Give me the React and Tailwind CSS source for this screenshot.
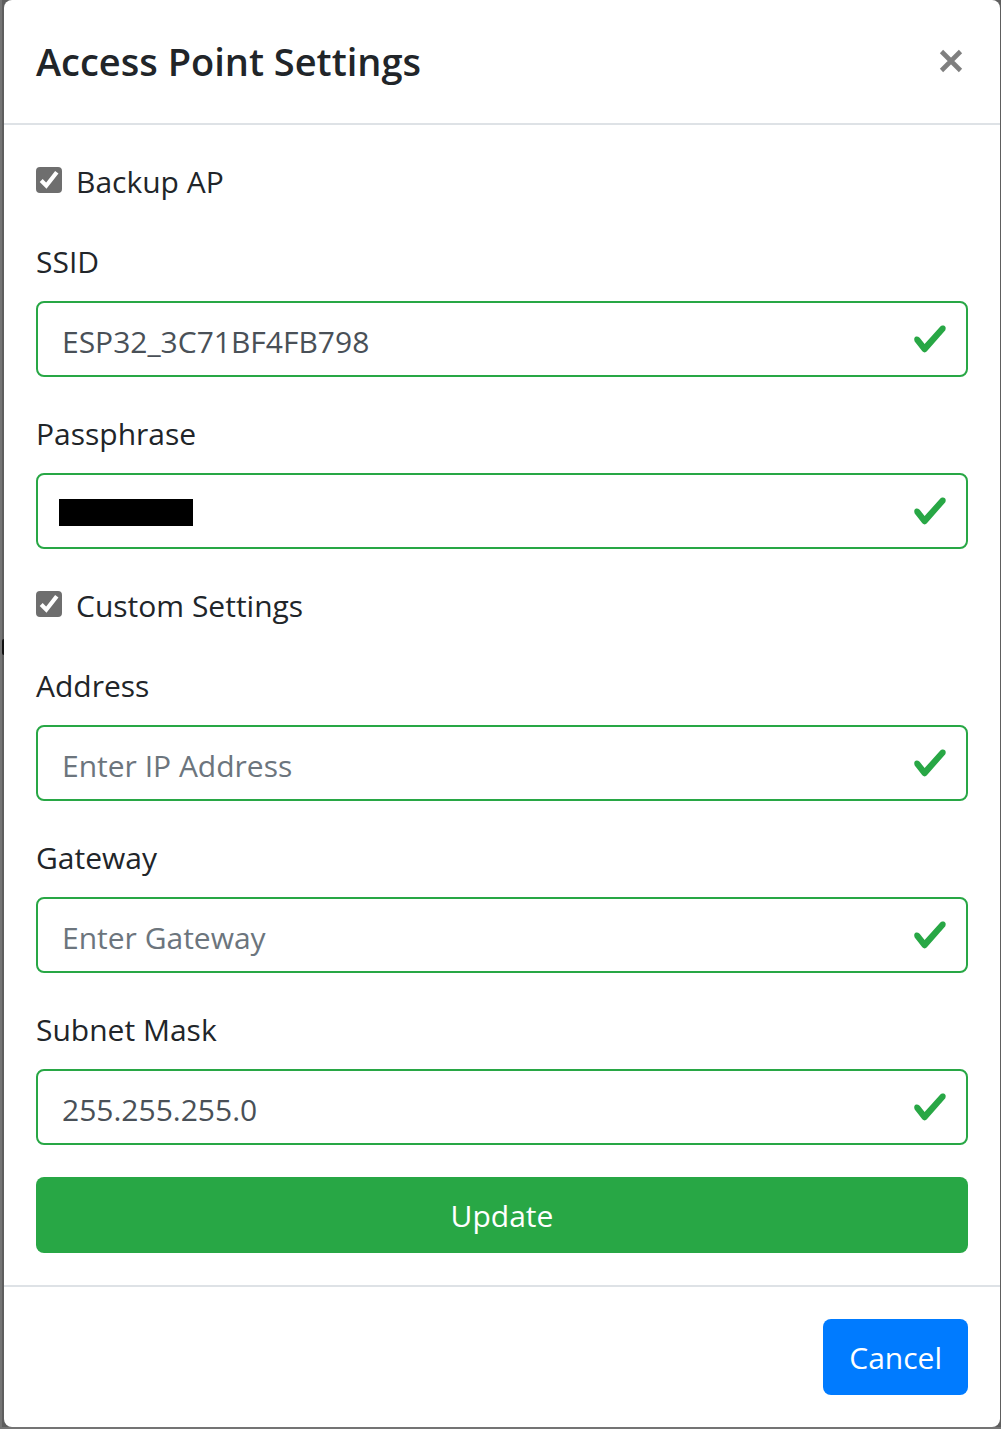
import React from "react";
import { useState } from "react";

function ValidIcon() {
  return (
    <svg
      viewBox="0 0 8 8"
      aria-hidden="true"
      className="pointer-events-none absolute right-5 top-5 size-9 fill-[#28a745]"
    >
      <path d="M2.3 6.73L.6 4.53c-.4-1.04.46-1.4 1.1-.8l1.1 1.4 3.4-3.8c.6-.63 1.6-.27 1.2.7l-4 4.6c-.43.5-.8.4-1.1.1z" />
    </svg>
  );
}

function Field({ id, label, type = "text", initial = "", placeholder, masked = false }) {
  const [value, setValue] = useState(initial);
  return (
    <div className="flex flex-col gap-4">
      <label htmlFor={id}>{label}</label>
      <div className="relative">
        <input
          id={id}
          type={type}
          value={value}
          placeholder={placeholder}
          onChange={(e) => setValue(e.target.value)}
          className="block h-19 w-full rounded-lg border-2 border-[#28a745] bg-white pt-1 pr-18 pl-6 text-[#495057] outline-none placeholder:text-[#6c757d]"
        />
        {masked && <span className="absolute top-[26px] left-[23px] h-[27px] w-[134px] bg-black" />}
        <ValidIcon />
      </div>
    </div>
  );
}

function Check({ id, label }) {
  const [on, setOn] = useState(true);
  return (
    <div className="flex h-12 items-start gap-[14px]">
      <span className="mt-[10px] grid size-[26px] shrink-0">
        <input
          id={id}
          type="checkbox"
          checked={on}
          onChange={(e) => setOn(e.target.checked)}
          className="col-start-1 row-start-1 size-[26px] appearance-none rounded border-2 border-[#6e6e6e] checked:bg-[#6e6e6e]"
        />
        {on && (
          <svg
            viewBox="0 0 26 26"
            aria-hidden="true"
            className="pointer-events-none col-start-1 row-start-1 size-[26px] fill-none stroke-white"
          >
            <path d="M5.2 13.6L10.3 18.7L20.8 5.2" strokeWidth="4.2" />
          </svg>
        )}
      </span>
      <label htmlFor={id}>{label}</label>
    </div>
  );
}

export default function App() {
  return (
    <div className="bg-[#747474] pb-0.5 pl-0.5 font-['Open_Sans','Noto_Sans',sans-serif] text-[30px] leading-[50px] text-[#212529]">
      <div className="relative bg-[#5e5e5e] pr-px pl-0.5">
        <span className="absolute top-[639px] left-0 h-4 w-0.5 rounded-l-full bg-[#111111]" />
        <div role="dialog" aria-labelledby="title" className="rounded-lg bg-white">
          <header className="flex h-[125px] items-center justify-between border-b-2 border-[#dee2e6] px-8 pb-0.5">
            <h1 id="title" className="text-[38px] font-semibold">
              Access Point Settings
            </h1>
            <button type="button" aria-label="Close" className="mr-1">
              <svg viewBox="0 0 26 26" className="size-[26px] stroke-[#7f7f7f]">
                <path d="M3.5 3.5L22.5 22.5M22.5 3.5L3.5 22.5" strokeWidth="4.6" />
              </svg>
            </button>
          </header>
          <form onSubmit={(e) => e.preventDefault()} className="flex flex-col gap-8 p-8 [&_label]:h-12">
            <Check id="backup" label="Backup AP" />
            <Field id="ssid" label="SSID" initial="ESP32_3C71BF4FB798" />
            <Field id="pass" label="Passphrase" type="password" masked />
            <Check id="custom" label="Custom Settings" />
            <Field id="address" label="Address" placeholder="Enter IP Address" />
            <Field id="gateway" label="Gateway" placeholder="Enter Gateway" />
            <Field id="mask" label="Subnet Mask" initial="255.255.255.0" />
            <button type="submit" className="h-19 rounded-lg bg-[#28a745] pt-0.5 text-white">
              Update
            </button>
          </form>
          <footer className="flex justify-end border-t-2 border-[#dee2e6] p-8">
            <button type="button" className="h-19 rounded-lg bg-[#007bff] px-[26px] pt-0.5 text-white">
              Cancel
            </button>
          </footer>
        </div>
      </div>
    </div>
  );
}
